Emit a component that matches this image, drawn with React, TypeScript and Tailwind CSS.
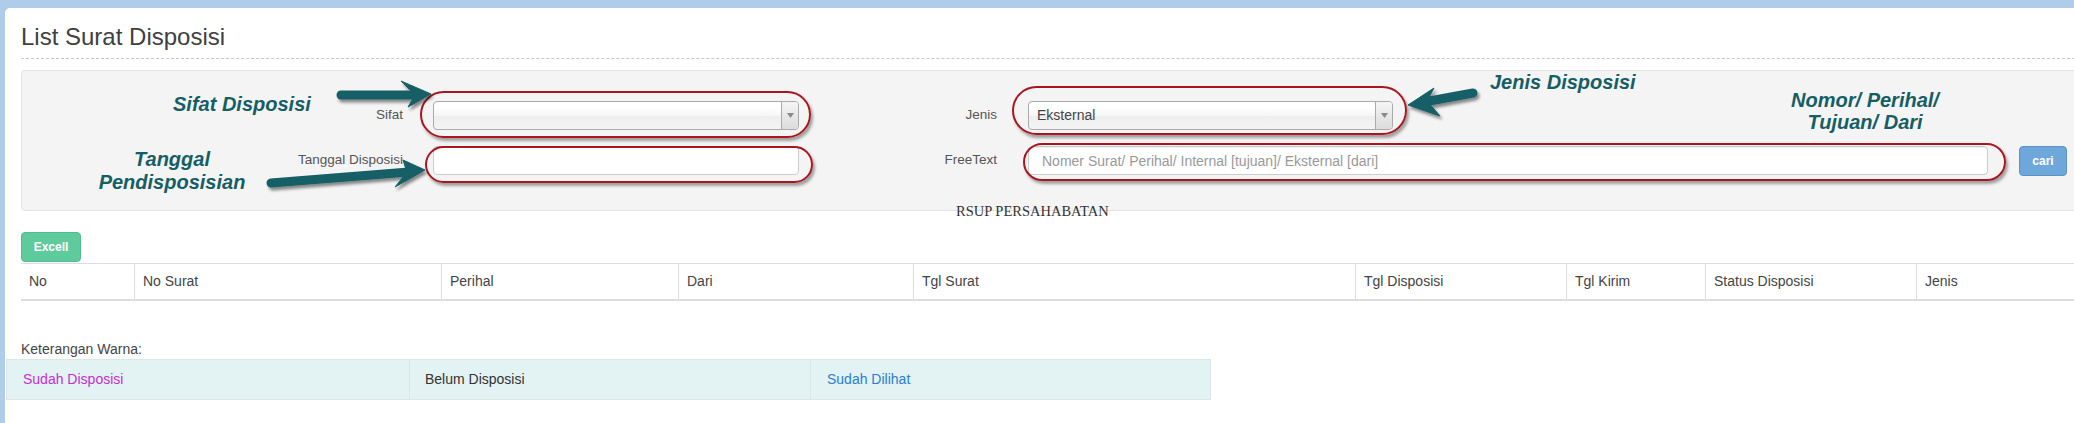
import React from 'react';

const columns = [
  { label: 'No', w: 'w-[113px]', first: true },
  { label: 'No Surat', w: 'w-[307px]' },
  { label: 'Perihal', w: 'w-[237px]' },
  { label: 'Dari', w: 'w-[235px]' },
  { label: 'Tgl Surat', w: 'w-[442px]' },
  { label: 'Tgl Disposisi', w: 'w-[211px]' },
  { label: 'Tgl Kirim', w: 'w-[139px]' },
  { label: 'Status Disposisi', w: 'w-[211px]' },
  { label: 'Jenis', w: 'w-[260px]' },
];

const ChosenSelect = ({ value, width }: { value?: string; width: string }) => (
  <div
    className={`${width} h-[29px] flex items-stretch rounded-[4px] border border-[#aaa] bg-[linear-gradient(#fff_20%,#f6f6f6_50%,#eee_52%,#f4f4f4_100%)] overflow-hidden`}
  >
    <div className="flex-1 flex items-center pl-[8px] text-[14px] text-[#444]">{value}</div>
    <div className="w-[17px] flex items-center justify-center border-l border-[#aaa] bg-[linear-gradient(#f4f4f4,#dcdcdc)]">
      <svg width="7" height="5" viewBox="0 0 7 5">
        <polygon points="0,0 7,0 3.5,5" fill="#8a8a8a" />
      </svg>
    </div>
  </div>
);

const Oval = ({ cls }: { cls: string }) => (
  <div
    className={`absolute ${cls} rounded-full border-2 border-[#a9161f] shadow-[2px_3px_3px_rgba(0,0,0,0.35)] pointer-events-none`}
  />
);

export default function App() {
  return (
    <div className="relative w-[2074px] h-[423px] overflow-hidden bg-[#afcdea] pt-[8px] pl-[5px] font-['Liberation_Sans',Arial,sans-serif]">
      {/* white page panel */}
      <div className="w-[2120px] h-[420px] bg-white rounded-tl-[5px] pl-[16px] pt-[16px]">
        <div className="h-[35px] border-b border-dashed border-[#c8c8c8]">
          <h3 className="text-[24px] leading-[26px] text-[#404040]">List Surat Disposisi</h3>
        </div>

        {/* filter well */}
        <div className="mt-[11px] border border-[#e3e3e3] bg-[#f4f4f4] rounded-[4px] pt-[30px] pb-[35px]">
          <div className="flex items-center h-[29px]">
            <div className="w-[381px] shrink-0 text-right text-[13.5px] text-[#555]">Sifat</div>
            <div className="ml-[30px] shrink-0">
              <ChosenSelect width="w-[366px]" />
            </div>
            <div className="w-[198px] shrink-0 text-right text-[13.5px] text-[#555]">Jenis</div>
            <div className="ml-[31px] shrink-0">
              <ChosenSelect width="w-[365px]" value="Eksternal" />
            </div>
          </div>
          <div className="flex items-center h-[29px] mt-[16px]">
            <div className="w-[381px] shrink-0 text-right text-[13.5px] text-[#555]">Tanggal Disposisi</div>
            <input
              className="ml-[30px] w-[366px] shrink-0 h-[29px] rounded-[4px] border border-[#ccc] bg-white outline-none shadow-[inset_0_1px_1px_rgba(0,0,0,0.075)]"
              readOnly
            />
            <div className="w-[198px] shrink-0 text-right text-[13.5px] text-[#555]">FreeText</div>
            <input
              className="ml-[31px] w-[960px] shrink-0 h-[29px] rounded-[4px] border border-[#ccc] bg-white px-[13px] text-[14px] outline-none placeholder:text-[#999] shadow-[inset_0_1px_1px_rgba(0,0,0,0.075)]"
              placeholder="Nomer Surat/ Perihal/ Internal [tujuan]/ Eksternal [dari]"
              readOnly
            />
            <button className="ml-[31px] w-[48px] shrink-0 h-[30px] rounded-[4px] border border-[#5b93c9] bg-[#6ea8db] text-white text-[12px] font-bold">
              cari
            </button>
          </div>
        </div>

        <div className="-mt-[7px] pl-[935px] leading-none text-[14.5px] text-[#333] font-['Liberation_Serif',serif]">
          RSUP PERSAHABATAN
        </div>

        <button className="mt-[13.5px] w-[60px] h-[30px] rounded-[4px] border border-[#4fbd8d] bg-[#5fcb9c] text-white text-[12px] font-bold">
          Excell
        </button>

        {/* table header */}
        <div className="mt-[1px] flex border-t border-b-2 border-[#ddd]">
          {columns.map((c) => (
            <div
              key={c.label}
              className={`${c.w} shrink-0 h-[35px] flex items-center pl-[8px] text-[14px] text-[#444] ${c.first ? '' : 'border-l border-[#ddd]'}`}
            >
              {c.label}
            </div>
          ))}
        </div>

        <div className="mt-[38px] text-[14px] leading-[20px] text-[#444]">Keterangan Warna:</div>
        <div className="-ml-[15px] w-[1205px] flex border border-[#dbe6e6] bg-[#e3f2f2] text-[14px]">
          <div className="w-[402px] h-[39px] flex items-center pl-[16px] text-[#c42fd4]">Sudah Disposisi</div>
          <div className="w-[401px] h-[39px] flex items-center pl-[15px] border-l border-[#dbe6e6] text-[#333]">Belum Disposisi</div>
          <div className="flex-1 h-[39px] flex items-center pl-[16px] border-l border-[#dbe6e6] text-[#2a7fd2]">Sudah Dilihat</div>
        </div>
      </div>

      {/* annotation overlay */}
      <Oval cls="left-[420px] top-[91px] w-[391px] h-[47px]" />
      <Oval cls="left-[425px] top-[146px] w-[388px] h-[37px]" />
      <Oval cls="left-[1012px] top-[86px] w-[395px] h-[49px]" />
      <Oval cls="left-[1023px] top-[143px] w-[983px] h-[38px]" />

      <svg className="absolute left-0 top-0 pointer-events-none" width="2074" height="423">
        <defs>
          <filter id="sh" x="-20%" y="-50%" width="140%" height="200%">
            <feDropShadow dx="2" dy="3" stdDeviation="1.5" floodColor="#000" floodOpacity="0.45" />
          </filter>
        </defs>
        <g fill="#155e66" stroke="#155e66" filter="url(#sh)">
          <line x1="341" y1="95" x2="412" y2="95" strokeWidth="9" strokeLinecap="round" />
          <polygon points="401,81 431,94 408,107 415,95" strokeWidth="1" />
          <line x1="271" y1="183" x2="409" y2="172" strokeWidth="9" strokeLinecap="round" />
          <polygon points="403,160 425,170 395,187 407,172" strokeWidth="1" />
          <line x1="1473" y1="93" x2="1424" y2="102" strokeWidth="9" strokeLinecap="round" />
          <polygon points="1408,105 1434,88 1427,101 1440,116" strokeWidth="1" />
        </g>
      </svg>

      <div className="absolute left-[173px] top-[94px] text-[20px] leading-[20px] font-bold italic text-[#155e66]">
        Sifat Disposisi
      </div>
      <div className="absolute left-[92px] top-[148px] w-[160px] text-center text-[20px] leading-[23px] font-bold italic text-[#155e66]">
        Tanggal
        <br />
        Pendisposisian
      </div>
      <div className="absolute left-[1490px] top-[72px] text-[20px] leading-[20px] font-bold italic text-[#155e66]">
        Jenis Disposisi
      </div>
      <div className="absolute left-[1765px] top-[89px] w-[200px] text-center text-[20px] leading-[22px] font-bold italic text-[#155e66]">
        Nomor/ Perihal/
        <br />
        Tujuan/ Dari
      </div>
    </div>
  );
}
